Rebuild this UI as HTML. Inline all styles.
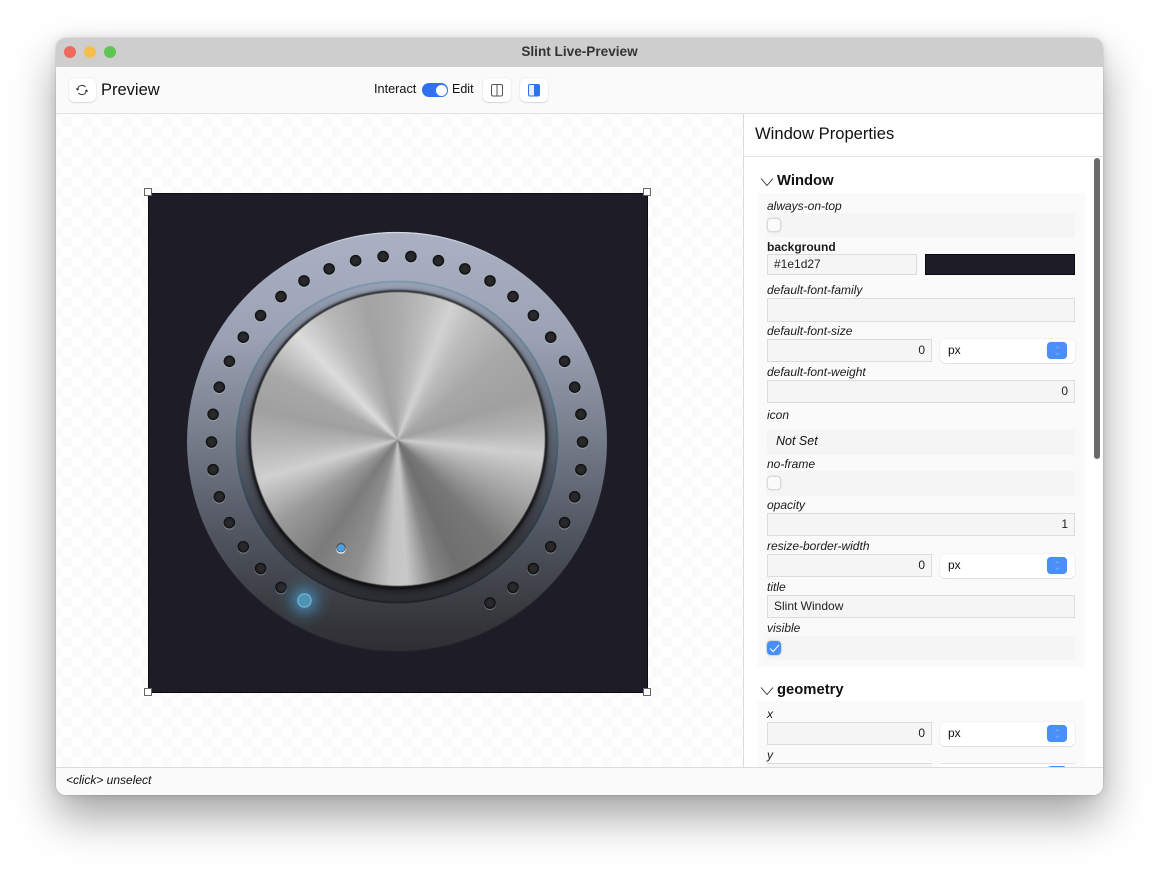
<!DOCTYPE html>
<html><head><meta charset="utf-8"><style>
html,body{margin:0;padding:0;width:1159px;height:869px;background:#fff;overflow:hidden;font-family:"Liberation Sans",sans-serif;color:#111}
div,span,svg{position:absolute;box-sizing:border-box}
#win{left:56px;top:38px;width:1047px;height:757px;border-radius:10px;background:#fff;box-shadow:0 22px 44px rgba(0,0,0,.36),0 0 10px rgba(0,0,0,.12),0 0 1px rgba(0,0,0,.35)}
.l{font-size:12px;font-style:italic;left:767px;height:14px;line-height:14px;white-space:nowrap;color:#1a1a1a}
.i{background:#f5f5f5;border:1px solid #dcdcdc;border-bottom-width:1.5px;font-size:12px;line-height:21px;white-space:nowrap;color:#222}
.r{text-align:right;padding-right:6px}
.row{left:767px;width:308px;background:#f5f5f5}
.c{width:14px;height:14px;left:767px;background:#fbfbfb;border:1px solid #dadada;border-radius:4px;box-shadow:0 0 1.5px rgba(0,0,0,.2)}
.cb{left:940px;width:135px;height:23.5px;background:#fff;border-radius:5px;box-shadow:0 0 1px rgba(0,0,0,.2),0 1px 1px rgba(0,0,0,.08);font-size:12px;line-height:22px;padding-left:8px}
.bb{left:107px;top:3px;width:20px;height:17px;background:#4a8ff8;border-radius:4px;box-shadow:0 0 1px rgba(0,0,0,.25)}
.btn{background:#fff;border-radius:5px;box-shadow:0 0 1px rgba(0,0,0,.22),0 1px 1px rgba(0,0,0,.1);top:78px;height:24px}
.h{font-weight:bold;font-size:14.8px;left:777px;height:18px;line-height:18px}
</style></head><body>
<div id="win"></div>
<div style="left:56px;top:38px;width:1047px;height:757px;border-radius:10px;overflow:hidden;background:#fff">
<div style="left:0;top:0;width:1047px;height:29px;background:#cecece"></div>
<div style="left:0;top:29px;width:1047px;height:47px;background:#fafafa;border-bottom:1px solid #dfdfdf"></div>
<div style="left:0;top:76px;width:687px;height:653px;background-color:#fff;background-image:conic-gradient(#fafafa 25%,#fff 0 50%,#fafafa 0 75%,#fff 0);background-size:20px 20px;background-position:-4px 3px"></div>
</div>
<div style="left:8px;top:44px;width:1143px;height:16px;text-align:center;font-size:13.6px;font-weight:bold;line-height:16px;color:#333">Slint Live-Preview</div>
<div style="left:64px;top:46px;width:12px;height:12px;border-radius:50%;background:#ee6a5f"></div>
<div style="left:84px;top:46px;width:12px;height:12px;border-radius:50%;background:#f5bf4f"></div>
<div style="left:104px;top:46px;width:12px;height:12px;border-radius:50%;background:#61c554"></div>

<div class="btn" style="left:69px;width:27px"></div>
<svg style="left:76px;top:84px" width="12" height="12" viewBox="0 0 14 14" fill="none" stroke="#333" stroke-width="1.1"><path d="M1.8 6.2A5.2 5.2 0 0 1 11 3.6"/><path d="M12.2 7.8A5.2 5.2 0 0 1 3 10.4"/><path d="M.3 5.2L1.8 7L3.4 5.4M10.6 8.6L12.2 7L13.7 8.8"/></svg>
<div style="left:101px;top:80px;height:21px;line-height:21px;font-size:16.5px;white-space:nowrap">Preview</div>
<div style="left:374px;top:81px;height:16px;line-height:16px;font-size:12.7px">Interact</div>
<div style="left:422px;top:83px;width:26px;height:14px;border-radius:7px;background:#2f6ff0"></div>
<div style="left:435px;top:83.5px;width:13px;height:13px;border-radius:50%;background:#fff;border:1px solid #3a78ee"></div>
<div style="left:452px;top:81px;height:16px;line-height:16px;font-size:12.5px">Edit</div>
<div class="btn" style="left:483px;width:28px"></div>
<svg style="left:491px;top:84px" width="13" height="13" fill="none" stroke="#555"><rect x=".5" y=".5" width="11" height="11.5" rx="1.5"/><path d="M6 .5v11.5"/></svg>
<div class="btn" style="left:520px;width:28px"></div>
<svg style="left:528px;top:84px" width="13" height="13"><rect x=".5" y=".5" width="11" height="11.5" rx="1.5" fill="#e8f0fe" stroke="#2f6ff0"/><rect x="6" y=".5" width="5.5" height="11.5" fill="#2f6ff0"/></svg>

<!-- canvas -->
<div style="left:147.5px;top:192.5px;width:500px;height:500px;background:#1e1d27;border:1px solid #0c0c10"></div>
<svg style="left:0;top:0;filter:blur(.35px)" width="1159" height="869" viewBox="0 0 1159 869">
<defs>
<linearGradient id="disc" x1="0" y1="0" x2="0" y2="1"><stop offset="0" stop-color="#a9b1c3"/><stop offset=".25" stop-color="#9aa2b4"/><stop offset=".5" stop-color="#747b88"/><stop offset=".72" stop-color="#505560"/><stop offset=".92" stop-color="#36373c"/><stop offset="1" stop-color="#2e2e34"/></linearGradient>
<linearGradient id="edge" x1="0" y1="0" x2="0" y2="1"><stop offset="0" stop-color="#d4d9e3"/><stop offset=".1" stop-color="#aab2c2" stop-opacity=".25"/><stop offset=".2" stop-color="#aab2c2" stop-opacity="0"/><stop offset=".8" stop-color="#1e1d27" stop-opacity="0"/><stop offset="1" stop-color="#1e1d27" stop-opacity=".7"/></linearGradient>
<linearGradient id="gr" x1="0" y1="0" x2="0" y2="1"><stop offset="0" stop-color="#7f97ad"/><stop offset=".45" stop-color="#4f6a7d"/><stop offset=".75" stop-color="#2b3d4b"/><stop offset="1" stop-color="#1d2229"/></linearGradient>
<linearGradient id="in" x1="0" y1="0" x2="0" y2="1"><stop offset="0" stop-color="#98a2b4"/><stop offset=".3" stop-color="#747c8c"/><stop offset=".5" stop-color="#5a616e"/><stop offset=".8" stop-color="#35373d"/><stop offset="1" stop-color="#2b2c31"/></linearGradient>
<radialGradient id="hg" cx=".5" cy=".5" r=".5"><stop offset="0" stop-color="#2c2c2f"/><stop offset=".65" stop-color="#252528"/><stop offset="1" stop-color="#08080a"/></radialGradient>
<radialGradient id="gl"><stop offset="0" stop-color="#5ab4e6" stop-opacity=".7"/><stop offset=".35" stop-color="#4a9fd0" stop-opacity=".42"/><stop offset=".7" stop-color="#3f86b0" stop-opacity=".12"/><stop offset="1" stop-color="#3f86b0" stop-opacity="0"/></radialGradient>
<filter id="b1" x="-20%" y="-20%" width="140%" height="140%"><feGaussianBlur stdDeviation="1"/></filter>
<filter id="b2" x="-20%" y="-20%" width="140%" height="140%"><feGaussianBlur stdDeviation="2.5"/></filter>
<g id="h"><circle cy="1" r="6" fill="#d8dce4" opacity=".32"/><circle r="5.8" fill="url(#hg)"/></g>
</defs>
<circle cx="397" cy="442" r="210" fill="url(#disc)"/>
<circle cx="397" cy="442" r="209.5" fill="none" stroke="url(#edge)" stroke-width="1.2"/>
<g transform="translate(397 442)">
<use href="#h" x="13.9" y="-185.5"/><use href="#h" x="41.4" y="-181.3"/><use href="#h" x="67.9" y="-173.1"/><use href="#h" x="93" y="-161.1"/><use href="#h" x="116" y="-145.4"/><use href="#h" x="136.4" y="-126.5"/><use href="#h" x="153.7" y="-104.8"/><use href="#h" x="167.6" y="-80.7"/><use href="#h" x="177.7" y="-54.8"/><use href="#h" x="183.9" y="-27.7"/><use href="#h" x="185.5" y="0"/>
<use href="#h" x="183.9" y="27.7"/><use href="#h" x="177.7" y="54.8"/><use href="#h" x="167.6" y="80.7"/><use href="#h" x="153.7" y="104.8"/><use href="#h" x="136.4" y="126.5"/><use href="#h" x="116" y="145.4"/><use href="#h" x="93" y="161.1"/>
<use href="#h" x="-13.9" y="-185.5"/><use href="#h" x="-41.4" y="-181.3"/><use href="#h" x="-67.9" y="-173.1"/><use href="#h" x="-93" y="-161.1"/><use href="#h" x="-116" y="-145.4"/><use href="#h" x="-136.4" y="-126.5"/><use href="#h" x="-153.7" y="-104.8"/><use href="#h" x="-167.6" y="-80.7"/><use href="#h" x="-177.7" y="-54.8"/><use href="#h" x="-183.9" y="-27.7"/><use href="#h" x="-185.5" y="0"/>
<use href="#h" x="-183.9" y="27.7"/><use href="#h" x="-177.7" y="54.8"/><use href="#h" x="-167.6" y="80.7"/><use href="#h" x="-153.7" y="104.8"/><use href="#h" x="-136.4" y="126.5"/><use href="#h" x="-116" y="145.4"/>
</g>
<circle cx="304.5" cy="600.5" r="28" fill="url(#gl)"/>
<circle cx="304.5" cy="600.5" r="6.6" fill="#4f93b3" stroke="#6fb6d8" stroke-width="1.2"/>
<circle cx="397" cy="442" r="160.5" fill="url(#in)" stroke="url(#gr)" stroke-width="1.8"/>
<circle cx="398" cy="441" r="151" fill="#000" opacity=".35" filter="url(#b2)"/>
<circle cx="398" cy="439.5" r="149" fill="#08080a" filter="url(#b1)"/>
</svg>
<div style="left:251px;top:291.5px;width:294px;height:294px;border-radius:50%;filter:blur(.4px);box-shadow:inset 0 0 1.5px rgba(255,255,255,.55);background:conic-gradient(from 0deg at 146.5px 147.8px,#ababab 0deg,#bcbcbc 12deg,#d2d2d2 22deg,#bcbcbc 32deg,#a8a8a8 50deg,#a0a0a0 72deg,#b2b2b2 85deg,#cfcfcf 96deg,#b8b8b8 106deg,#9a9a9a 120deg,#787878 136deg,#6f6f6f 155deg,#858585 165deg,#c8c8c8 176deg,#c4c4c4 183deg,#8f8f8f 197deg,#7b7b7b 215deg,#9a9a9a 235deg,#d0d0d0 254deg,#b6b6b6 268deg,#a0a0a0 282deg,#a8a8a8 298deg,#dcdcdc 316deg,#b8b8b8 331deg,#a3a3a3 347deg,#ababab 360deg)"></div>
<svg style="left:330px;top:537px" width="22" height="22"><circle cx="11" cy="11.8" r="5" fill="#e8ecf0"/><circle cx="11" cy="10.6" r="4.8" fill="#555"/><circle cx="11" cy="11" r="3.8" fill="#4aa0e2"/></svg>
<div style="left:143.5px;top:188px;width:8px;height:8px;background:#fff;border:1px solid #666"></div>
<div style="left:643px;top:188px;width:8px;height:8px;background:#fff;border:1px solid #666"></div>
<div style="left:143.5px;top:688px;width:8px;height:8px;background:#fff;border:1px solid #666"></div>
<div style="left:643px;top:688px;width:8px;height:8px;background:#fff;border:1px solid #666"></div>

<!-- right panel -->
<div style="left:743px;top:114px;width:360px;height:653px;background:#fff;border-left:1px solid #dcdcdc;overflow:hidden"></div>
<div style="left:744px;top:156px;width:359px;height:1px;background:#e4e4e4"></div>
<div style="left:755px;top:124px;height:20px;line-height:20px;font-size:16.6px;white-space:nowrap">Window Properties</div>
<div style="left:1094px;top:158px;width:6px;height:301px;border-radius:3px;background:#6a6a6a"></div>

<svg style="left:760px;top:177px" width="14" height="10" fill="none" stroke="#222" stroke-width=".8"><path d="M1 1.5L7 8.5L13 1.5"/></svg>
<div class="h" style="top:172px">Window</div>
<div style="left:757px;top:193px;width:328px;height:474px;background:#fafafa"></div>
<div class="l" style="top:199px">always-on-top</div>
<div class="row" style="top:213px;height:24px"></div><div class="c" style="top:218px"></div>
<div class="l" style="top:240px;font-style:normal;font-weight:bold">background</div>
<div class="i" style="left:767px;top:254px;width:150px;height:21px;padding-left:6px;line-height:19px">#1e1d27</div>
<div style="left:925px;top:254px;width:150px;height:21px;background:#1e1d27;border:1px solid #0b0b0f"></div>
<div class="l" style="top:283px">default-font-family</div>
<div class="i" style="left:767px;top:298px;width:308px;height:24px"></div>
<div class="l" style="top:324px">default-font-size</div>
<div class="i r" style="left:767px;top:339px;width:165px;height:23px">0</div>
<div class="cb" style="top:339px">px<div class="bb"><svg style="left:8px;top:3px" width="5" height="11" fill="none" stroke="#7fb0fa" stroke-width=".7"><path d="M.7 3.5L2.5 1.5L4.3 3.5M.7 7.5L2.5 9.5L4.3 7.5"/></svg></div></div>
<div class="l" style="top:365px">default-font-weight</div>
<div class="i r" style="left:767px;top:380px;width:308px;height:23px">0</div>
<div class="l" style="top:408px">icon</div>
<div class="row" style="top:430px;height:25px;font-size:12.5px;font-style:italic;line-height:22px;padding-left:9px">Not Set</div>
<div class="l" style="top:457px">no-frame</div>
<div class="row" style="top:471px;height:25px"></div><div class="c" style="top:476px"></div>
<div class="l" style="top:498px">opacity</div>
<div class="i r" style="left:767px;top:513px;width:308px;height:23px">1</div>
<div class="l" style="top:539px">resize-border-width</div>
<div class="i r" style="left:767px;top:554px;width:165px;height:23px">0</div>
<div class="cb" style="top:554px">px<div class="bb"><svg style="left:8px;top:3px" width="5" height="11" fill="none" stroke="#7fb0fa" stroke-width=".7"><path d="M.7 3.5L2.5 1.5L4.3 3.5M.7 7.5L2.5 9.5L4.3 7.5"/></svg></div></div>
<div class="l" style="top:580px">title</div>
<div class="i" style="left:767px;top:595px;width:308px;height:23px;padding-left:6px">Slint Window</div>
<div class="l" style="top:621px">visible</div>
<div class="row" style="top:636px;height:24px"></div>
<div class="c" style="top:641px;background:#4a8ff8;border-color:#4a8ff8;box-shadow:0 0 2px rgba(0,0,0,.35)"><svg style="left:.5px;top:.5px" width="11" height="11" fill="none" stroke="#fff" stroke-width="1"><path d="M1 5.5L4.2 8.5L10 2"/></svg></div>

<svg style="left:760px;top:686px" width="14" height="10" fill="none" stroke="#222" stroke-width=".8"><path d="M1 1.5L7 8.5L13 1.5"/></svg>
<div class="h" style="top:681px">geometry</div>
<div style="left:757px;top:701px;width:328px;height:66px;background:#fafafa"></div>
<div class="l" style="top:707px">x</div>
<div class="i r" style="left:767px;top:722px;width:165px;height:23px">0</div>
<div class="cb" style="top:722px">px<div class="bb"><svg style="left:8px;top:3px" width="5" height="11" fill="none" stroke="#7fb0fa" stroke-width=".7"><path d="M.7 3.5L2.5 1.5L4.3 3.5M.7 7.5L2.5 9.5L4.3 7.5"/></svg></div></div>
<div class="l" style="top:748px">y</div>
<div style="left:767px;top:763px;width:165px;height:4px;background:#f5f5f5;border-top:1px solid #dcdcdc;overflow:hidden"></div>
<div style="left:940px;top:763px;width:135px;height:4px;overflow:hidden;background:#fff;border-top:1px solid #e2e2e2"><div style="left:107px;top:2px;width:20px;height:4px;background:#4a8ff8;border-radius:4px 4px 0 0"></div></div>

<!-- footer -->
<div style="left:56px;top:767px;width:1047px;height:28px;background:#fafafa;border-top:1px solid #dcdcdc;border-radius:0 0 10px 10px"></div>
<div style="left:66px;top:772.5px;height:14px;line-height:14px;font-size:12px;font-style:italic;white-space:nowrap">&lt;click&gt; unselect</div>
</body></html>
